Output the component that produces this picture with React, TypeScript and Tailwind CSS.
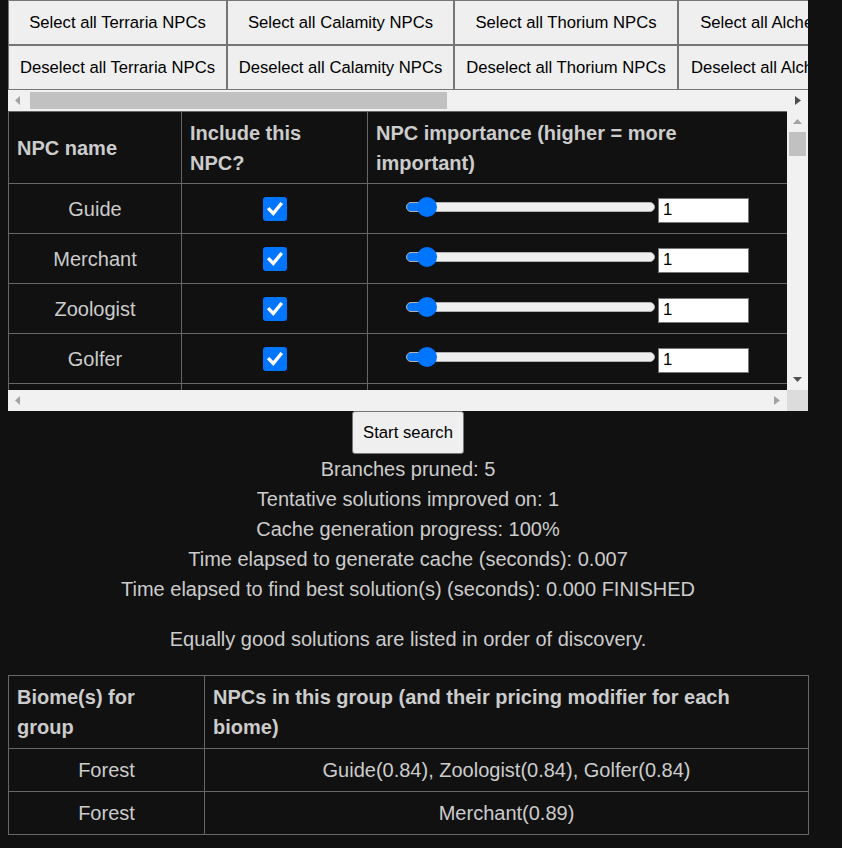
import React from "react";

const font = "font-['Liberation_Sans',Arial,sans-serif]";

const groups = [
  { name: "Terraria", w: "w-[219px]" },
  { name: "Calamity", w: "w-[227px]" },
  { name: "Thorium", w: "w-[224px]" },
  { name: "Alchemist", w: "w-[236px]" },
  { name: "Fargo's", w: "w-[216px]" },
];

const npcs = ["Guide", "Merchant", "Zoologist", "Golfer", "Angler"];

function Arrow({ dir, dark }: { dir: "left" | "right" | "up" | "down"; dark?: boolean }) {
  const fill = dark ? "#505050" : "#a3a3a3";
  if (dir === "left")
    return (
      <svg width="6" height="9" viewBox="0 0 6 9">
        <polygon points="5,0 5,9 0,4.5" fill={fill} />
      </svg>
    );
  if (dir === "right")
    return (
      <svg width="6" height="9" viewBox="0 0 6 9">
        <polygon points="0,0 0,9 6,4.5" fill={fill} />
      </svg>
    );
  if (dir === "up")
    return (
      <svg width="9" height="5" viewBox="0 0 9 5">
        <polygon points="0,5 9,5 4.5,0" fill={fill} />
      </svg>
    );
  return (
    <svg width="9" height="5" viewBox="0 0 9 5">
      <polygon points="0,0 9,0 4.5,5" fill={fill} />
    </svg>
  );
}

function Checkbox() {
  return (
    <span className="inline-flex h-[24px] w-[24px] items-center justify-center rounded-[3px] bg-[#0075ff]">
      <svg width="20" height="20" viewBox="0 0 20 20">
        <path d="M4.3 10.3 L8.3 14.5 L15.7 5.3" fill="none" stroke="white" strokeWidth="3.4" strokeLinecap="square" />
      </svg>
    </span>
  );
}

function Slider() {
  return (
    <div className="relative mb-[4px] h-[10px] w-[249px] rounded-full border border-[#b2b2b2] bg-[#efefef]">
      <div className="h-full w-[22px] rounded-full bg-[#0075ff]" />
      <div className="absolute left-[10px] top-[-6px] h-[20px] w-[20px] rounded-full bg-[#0075ff]" />
    </div>
  );
}

export default function App() {
  return (
    <div className={`min-h-screen bg-[#111] text-[#ccc] ${font}`}>
      <div className="ml-2 w-[800px]">
        {/* group buttons */}
        <div className="overflow-hidden">
          <div className="flex w-max">
            {groups.map((g) => (
              <div key={g.name} className={`flex flex-col ${g.w}`}>
                <button className="h-[45px] w-full border border-[#767676] bg-[#efefef] px-[10px] text-[16.67px] whitespace-nowrap text-black">
                  Select all {g.name} NPCs
                </button>
                <button className="h-[45px] w-full border border-[#767676] bg-[#efefef] px-[10px] text-[16.67px] whitespace-nowrap text-black">
                  Deselect all {g.name} NPCs
                </button>
              </div>
            ))}
          </div>
        </div>
        <div className="flex h-[21px] items-center bg-[#f1f1f1]">
          <div className="flex w-[20px] justify-center">
            <Arrow dir="left" />
          </div>
          <div className="flex flex-1 items-center">
            <div className="ml-[2px] h-[17px] w-[417px] bg-[#c1c1c1]" />
          </div>
          <div className="flex w-[20px] justify-center">
            <Arrow dir="right" dark />
          </div>
        </div>

        {/* NPC table */}
        <div className="flex">
          <div className="h-[279px] w-[779px] overflow-hidden">
            <table className="w-[779px] table-fixed border-collapse text-[20px] leading-[30px]">
              <colgroup>
                <col className="w-[173px]" />
                <col className="w-[186px]" />
                <col className="w-[420px]" />
              </colgroup>
              <thead>
                <tr>
                  <th className="border border-[#666] px-2 pt-[6px] pb-[5px] text-left font-bold">NPC name</th>
                  <th className="border border-[#666] px-2 pt-[6px] pb-[5px] text-left font-bold">Include this NPC?</th>
                  <th className="border border-[#666] px-2 pt-[6px] pb-[5px] text-left font-bold">
                    NPC importance (higher = more important)
                  </th>
                </tr>
              </thead>
              <tbody>
                {npcs.map((n) => (
                  <tr key={n}>
                    <td className="border border-[#666] px-2 py-[6px]">
                      <div className="flex h-[37px] items-center justify-center">{n}</div>
                    </td>
                    <td className="border border-[#666] px-2 py-[6px]">
                      <div className="flex h-[37px] items-center justify-center">
                        <Checkbox />
                      </div>
                    </td>
                    <td className="border border-[#666] px-2 py-[6px]">
                      <div className="flex h-[37px] items-center justify-center gap-[3px]">
                        <Slider />
                        <input
                          readOnly
                          value="1"
                          className="mt-[3px] h-[25px] w-[91px] border border-[#767676] bg-white px-[4px] text-[16.67px] text-black outline-none"
                        />
                      </div>
                    </td>
                  </tr>
                ))}
              </tbody>
            </table>
          </div>
          <div className="flex h-[279px] w-[21px] flex-col items-center bg-[#f1f1f1]">
            <div className="flex h-[21px] items-center">
              <Arrow dir="up" />
            </div>
            <div className="h-[24px] w-[17px] bg-[#c1c1c1]" />
            <div className="flex-1" />
            <div className="flex h-[22px] items-center">
              <Arrow dir="down" dark />
            </div>
          </div>
        </div>
        <div className="flex h-[21px]">
          <div className="flex w-[779px] items-center justify-between bg-[#f1f1f1] px-[7px]">
            <Arrow dir="left" />
            <Arrow dir="right" />
          </div>
          <div className="w-[21px] bg-[#dcdcdc]" />
        </div>

        <div className="flex justify-center">
          <button className="h-[43px] rounded-[3px] border border-[#767676] bg-[#efefef] px-[10px] text-[16.67px] text-black">
            Start search
          </button>
        </div>

        <div className="text-center text-[20px] leading-[30px]">
          <div>Branches pruned: 5</div>
          <div>Tentative solutions improved on: 1</div>
          <div>Cache generation progress: 100%</div>
          <div>Time elapsed to generate cache (seconds): 0.007</div>
          <div>Time elapsed to find best solution(s) (seconds): 0.000 FINISHED</div>
          <p className="mt-[20px]">Equally good solutions are listed in order of discovery.</p>
        </div>

        <table className="mt-[21px] w-[800px] table-fixed border-collapse text-[20px] leading-[30px]">
          <colgroup>
            <col className="w-[196px]" />
            <col className="w-[604px]" />
          </colgroup>
          <thead>
            <tr>
              <th className="border border-[#666] px-2 py-[6px] text-left font-bold">Biome(s) for group</th>
              <th className="border border-[#666] px-2 py-[6px] text-left font-bold">
                NPCs in this group (and their pricing modifier for each biome)
              </th>
            </tr>
          </thead>
          <tbody>
            <tr>
              <td className="border border-[#666] px-2 py-[6px] text-center">Forest</td>
              <td className="border border-[#666] px-2 py-[6px] text-center">
                Guide(0.84), Zoologist(0.84), Golfer(0.84)
              </td>
            </tr>
            <tr>
              <td className="border border-[#666] px-2 py-[6px] text-center">Forest</td>
              <td className="border border-[#666] px-2 py-[6px] text-center">Merchant(0.89)</td>
            </tr>
          </tbody>
        </table>
      </div>
    </div>
  );
}
